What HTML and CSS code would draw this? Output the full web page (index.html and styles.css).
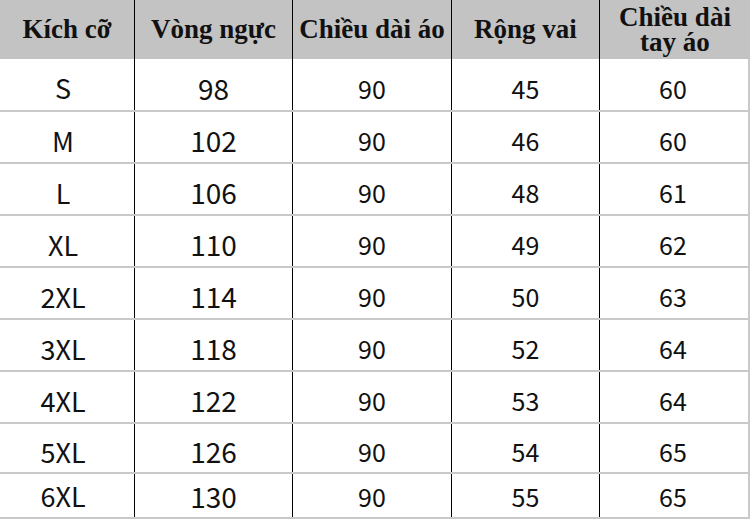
FILE: index.html
```html
<!DOCTYPE html>
<html lang="vi">
<head>
<meta charset="utf-8">
<title>Bảng kích cỡ</title>
<link rel="stylesheet" href="styles.css">
</head>
<body>
<div class="chart">
  <div class="row head">
    <div class="cell c1">Kích cỡ</div>
    <div class="cell c2">Vòng ngực</div>
    <div class="cell c3">Chiều dài áo</div>
    <div class="cell c4">Rộng vai</div>
    <div class="cell c5"><span class="two-line">Chiều dài<br>tay áo</span></div>
  </div>
  <div class="row body tall">
    <div class="cell c1">S</div><div class="cell c2">98</div><div class="cell c3">90</div><div class="cell c4">45</div><div class="cell c5">60</div>
  </div>
  <div class="row body">
    <div class="cell c1">M</div><div class="cell c2">102</div><div class="cell c3">90</div><div class="cell c4">46</div><div class="cell c5">60</div>
  </div>
  <div class="row body">
    <div class="cell c1">L</div><div class="cell c2">106</div><div class="cell c3">90</div><div class="cell c4">48</div><div class="cell c5">61</div>
  </div>
  <div class="row body">
    <div class="cell c1">XL</div><div class="cell c2">110</div><div class="cell c3">90</div><div class="cell c4">49</div><div class="cell c5">62</div>
  </div>
  <div class="row body">
    <div class="cell c1">2XL</div><div class="cell c2">114</div><div class="cell c3">90</div><div class="cell c4">50</div><div class="cell c5">63</div>
  </div>
  <div class="row body">
    <div class="cell c1">3XL</div><div class="cell c2">118</div><div class="cell c3">90</div><div class="cell c4">52</div><div class="cell c5">64</div>
  </div>
  <div class="row body">
    <div class="cell c1">4XL</div><div class="cell c2">122</div><div class="cell c3">90</div><div class="cell c4">53</div><div class="cell c5">64</div>
  </div>
  <div class="row body short">
    <div class="cell c1">5XL</div><div class="cell c2">126</div><div class="cell c3">90</div><div class="cell c4">54</div><div class="cell c5">65</div>
  </div>
  <div class="row body last">
    <div class="cell c1">6XL</div><div class="cell c2">130</div><div class="cell c3">90</div><div class="cell c4">55</div><div class="cell c5">65</div>
  </div>
</div>
</body>
</html>
```
FILE: styles.css
```css
html, body {
  margin: 0;
  padding: 0;
  background: #ffffff;
}

.chart {
  width: 750px;
  height: 519px;
  overflow: hidden;
  background: #ffffff;
}

.row {
  display: grid;
  grid-template-columns: 135px 158px 159px 148px 150px;
  box-sizing: border-box;
}

.cell {
  display: flex;
  align-items: center;
  justify-content: center;
  text-align: center;
  color: #111111;
  box-sizing: border-box;
}

.c1, .c2, .c3, .c4 {
  border-right: 1px solid #000000;
}

.head {
  height: 59px;
  background: #c3c3c3;
}

.head .cell {
  font-family: "Liberation Serif", "Times New Roman", serif;
  font-weight: bold;
  font-size: 27px;
  line-height: 26px;
  padding-bottom: 1px;
}

.two-line {
  display: block;
  line-height: 25px;
  padding-top: 1px;
}

.body {
  height: 52px;
  border-bottom: 2px solid #c9c9c9;
}

.body .cell {
  font-family: "Noto Sans CJK SC", "Noto Sans", sans-serif;
  font-size: 25px;
  padding-top: 6px;
}

.body .c1 {
  font-size: 27px;
  padding-right: 8px;
}

.body .c2 {
  font-size: 28px;
}

.body .c5 {
  border-right: 2px solid #c9c9c9;
  padding-right: 2px;
}

.tall {
  height: 53px;
}

.short {
  height: 50px;
}

.last {
  height: 45px;
}

.last .cell {
  padding-top: 0;
}
```
